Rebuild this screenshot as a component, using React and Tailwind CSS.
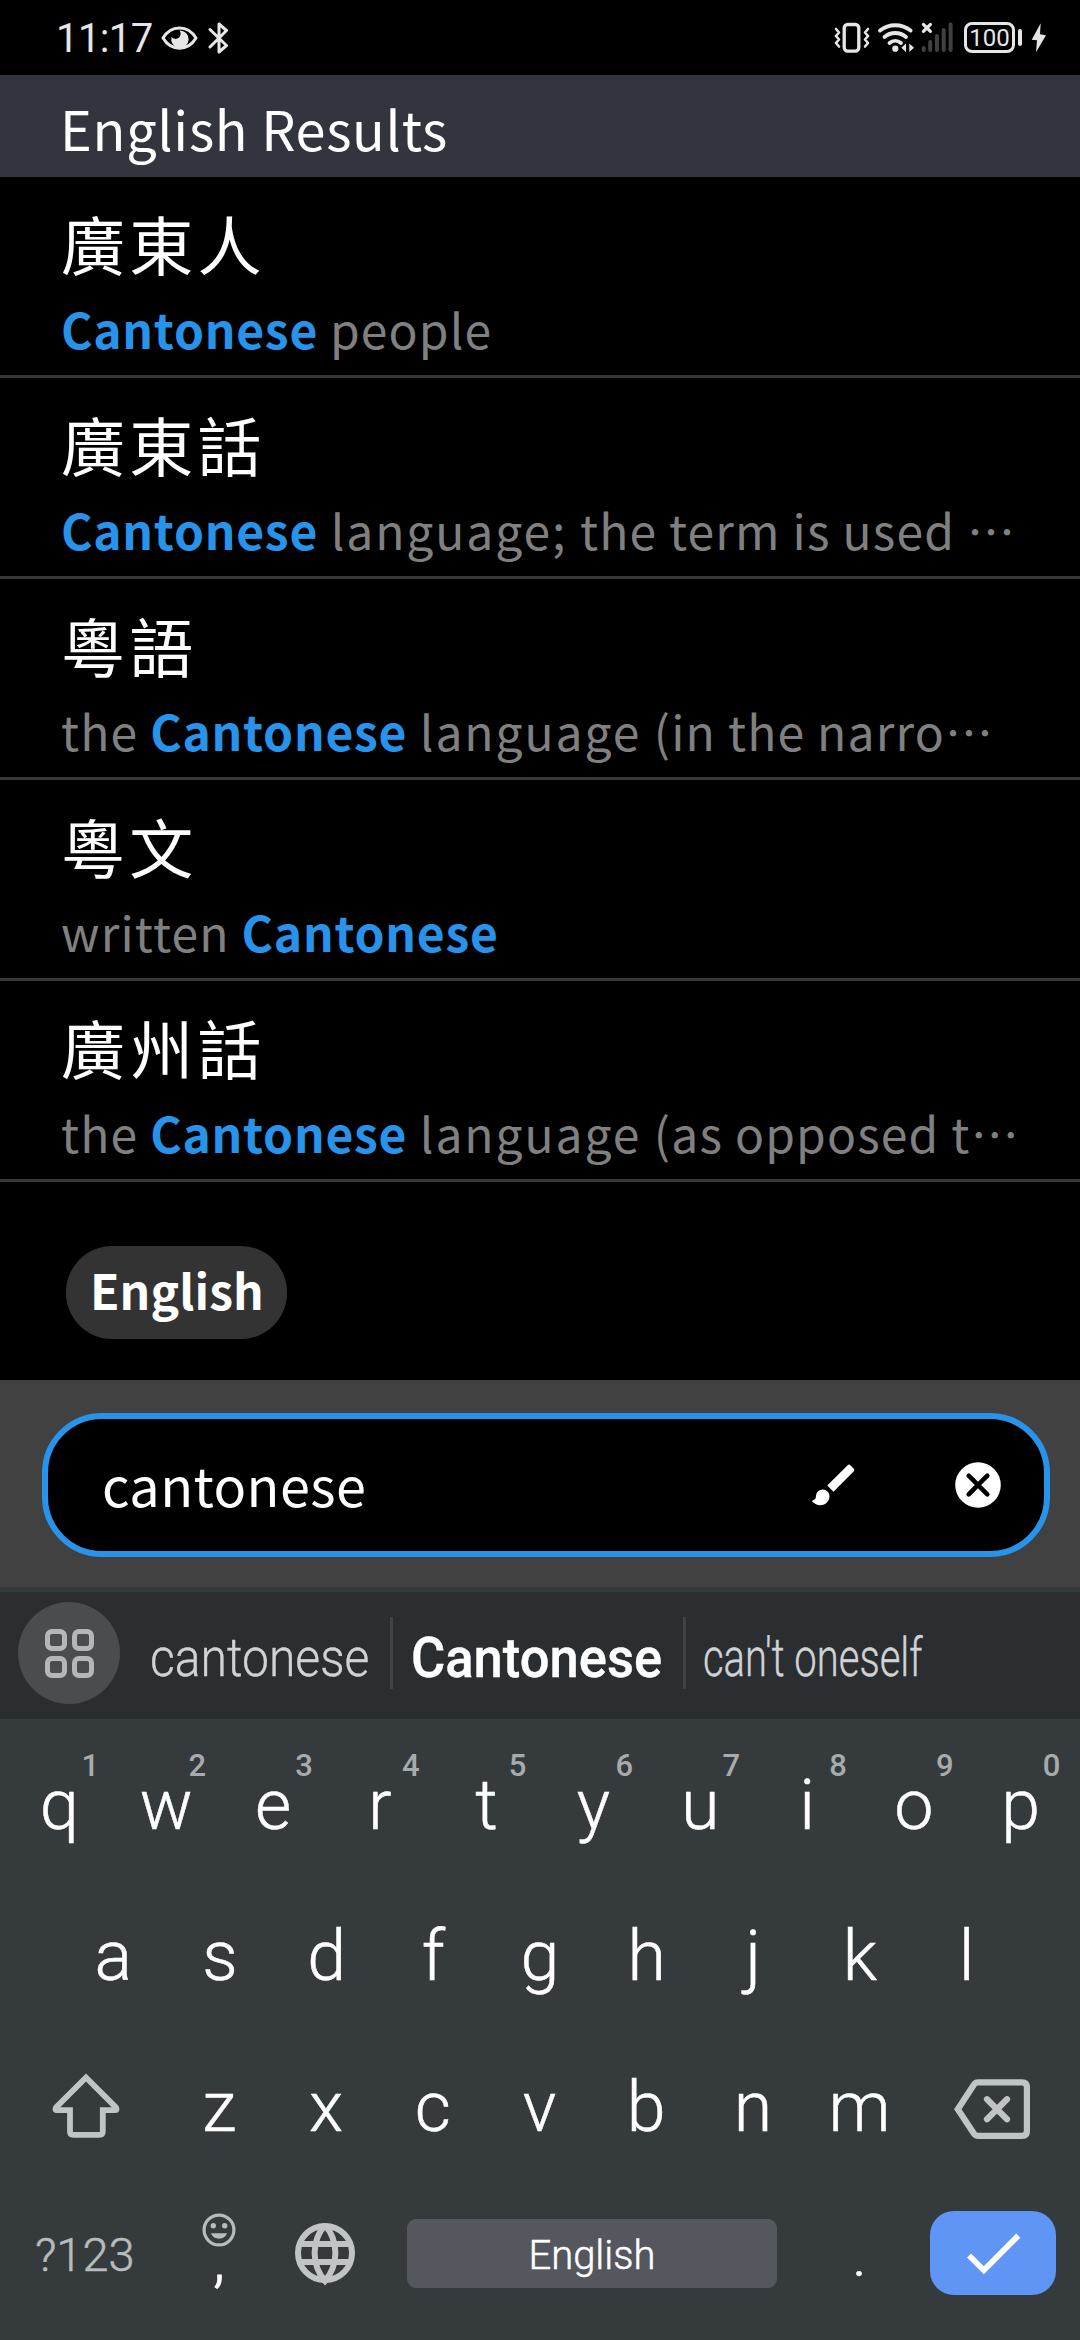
import React from 'react';

const entries = [
  { term: '廣東人', gloss: [['hit', 'Cantonese'], ['text', ' people']] },
  { term: '廣東話', gloss: [['hit', 'Cantonese'], ['wide', ' language; '], ['text', 'the term is used '], ['dots', '…']] },
  { term: '粵語', gloss: [['text', 'the '], ['hit', 'Cantonese'], ['wide', ' language '], ['text', '(in the narro'], ['dots', '…']] },
  { term: '粵文', gloss: [['text', 'written '], ['hit', 'Cantonese']] },
  { term: '廣州話', gloss: [['text', 'the '], ['hit', 'Cantonese'], ['wide', ' language '], ['text', '(as opposed t'], ['dots', '…']] },
];

const glossStyle = {
  hit: 'font-bold text-[#2793ea] tracking-[0.75px]',
  text: 'tracking-[1.150px]',
  wide: 'tracking-[1.9px]',
  dots: 'tracking-normal',
};

function StatusBar() {
  return (
    <div className="flex h-[75px] items-center justify-between pl-[56px] pr-[33px] font-[Roboto,sans-serif] text-[#e6e6e6]">
      <div className="flex items-center">
        <span className="w-[105px] pt-[2px] text-[40px] leading-[75px] tracking-[-0.600px]">11:17</span>
        <svg className="h-[75px] w-[37px]" viewBox="161 0 37 75">
          <path d="M163 38C171 24.500 188 24.500 196 38C188 51.500 171 51.500 163 38Z" fill="none" stroke="currentColor" strokeWidth="3" strokeLinejoin="round" />
          <path d="M179.500 30.500A8.700 8.700 0 1 1 171.500 37A5 5 0 0 0 179.500 30.500Z" fill="currentColor" />
        </svg>
        <svg className="ml-[10px] h-[75px] w-[21px]" viewBox="208 0 21 75" fill="none" stroke="currentColor" strokeWidth="3" strokeLinejoin="round" strokeLinecap="round">
          <path d="M210 29.500L226.500 45.500L219 52V24L226.500 30.500L210 47" />
        </svg>
      </div>
      <div className="flex items-center">
        <svg className="h-[75px] w-[38px]" viewBox="833 0 38 75" fill="none" stroke="currentColor" strokeLinejoin="round" strokeLinecap="round">
          <rect x="844.200" y="24.500" width="14.600" height="26.600" rx="3.500" strokeWidth="3.300" />
          <path d="M836 29l3 3.500l-3 3.500l3 3.500l-3 3.500l3 3.500M868 29l-3 3.500l3 3.500l-3 3.500l3 3.500l-3 3.500" strokeWidth="2.600" />
        </svg>
        <svg className="ml-[6px] h-[75px] w-[38px]" viewBox="877 0 38 75" fill="none" stroke="currentColor" strokeWidth="3.800" strokeLinecap="round">
          <path d="M880 30.500A25 25 0 0 1 910.600 30.500M884.500 37A16.500 16.500 0 0 1 906 37M889.500 43A9 9 0 0 1 901 43" />
          <circle cx="895.300" cy="48.700" r="3.100" fill="currentColor" stroke="none" />
          <path d="M906 43.500V52L901.300 47.800ZM909.300 43.500V52L914 47.800Z" fill="currentColor" stroke="none" />
        </svg>
        <svg className="ml-[5px] h-[75px] w-[34px]" viewBox="920 0 34 75" fill="none" strokeLinecap="round">
          <path d="M923.700 49.900V48M930.200 49.900V42M936.900 49.900V36M943.700 49.900V30M950.600 49.900V24.600" stroke="#404040" strokeWidth="4" />
          <path d="M923.400 24.400L930.400 31.400M930.400 24.400L923.400 31.400" stroke="currentColor" strokeWidth="3.200" />
        </svg>
        <div className="ml-[10px] flex h-[31px] w-[51px] items-center justify-center rounded-[8px] border-[3px] border-[#e6e6e6] text-[24px] leading-none">
          100
        </div>
        <div className="ml-[3px] h-[17px] w-[4px] rounded-full bg-[#e6e6e6]" />
        <svg className="ml-[8px] h-[75px] w-[17px]" viewBox="1029 0 17 75">
          <path d="M1039.700 23.300L1030.700 39.700L1036 40.300L1035 52.300L1045 35.300L1039 34.300Z" fill="currentColor" />
        </svg>
      </div>
    </div>
  );
}

function Entry({ term, gloss }) {
  return (
    <li className="flex h-[201px] flex-col gap-[16px] border-b-[3px] border-[#38383b] pl-[61px] pt-[25px]">
      <div className="h-[80px] text-[64px] leading-[80px] tracking-[4.200px] text-white">{term}</div>
      <div className="h-[60px] whitespace-pre text-[48px] leading-[60px] text-[#808080]">
        {gloss.map(([kind, text], i) => (
          <span key={i} className={glossStyle[kind]}>{text}</span>
        ))}
      </div>
    </li>
  );
}

function SearchBar() {
  return (
    <div className="h-[207px] bg-[#414141] pl-[42px] pr-[30px] pt-[33px]">
      <div className="flex h-[144px] items-center rounded-[60px] border-[6px] border-[#2793ea] bg-black pl-[54px] pr-[43px]">
        <span className="flex-1 pb-[3px] text-[54px] leading-[80px] tracking-[0.400px] text-white">cantonese</span>
        <svg className="h-[54px] w-[54px]" viewBox="0 0 24 24" fill="#fff">
          <path d="M7 14c-1.660 0-3 1.340-3 3 0 1.310-1.160 2-2 2 .92 1.220 2.490 2 4 2 2.210 0 4-1.790 4-4 0-1.660-1.340-3-3-3zm13.710-9.370l-1.340-1.340a.996.996 0 0 0-1.410 0L9 12.250 11.750 15l8.960-8.960c.39-.39.39-1.020 0-1.410z" />
        </svg>
        <svg className="ml-[94px] h-[46px] w-[46px]" viewBox="0 0 46 46">
          <circle cx="23" cy="23" r="22.800" fill="#fff" />
          <path d="M13.700 13.700L32.300 32.300M32.300 13.700L13.700 32.300" stroke="#000" strokeWidth="4.600" strokeLinecap="round" />
        </svg>
      </div>
    </div>
  );
}

function Suggestions() {
  return (
    <div className="flex h-[132px] items-start border-t-[5px] border-[#323a3d] bg-[#2a2e31] pl-[18px] pt-[10px] text-[54px] leading-[102px]">
      <div className="flex h-[102px] w-[102px] items-center justify-center rounded-full bg-[#4a4d50]">
        <div className="grid grid-cols-2 gap-[5px]">
          <i className="h-[22px] w-[22px] rounded-[7px] border-[5px] border-[#b3b7b8]" />
          <i className="h-[22px] w-[22px] rounded-[7px] border-[5px] border-[#b3b7b8]" />
          <i className="h-[22px] w-[22px] rounded-[7px] border-[5px] border-[#b3b7b8]" />
          <i className="h-[22px] w-[22px] rounded-[7px] border-[5px] border-[#b3b7b8]" />
        </div>
      </div>
      <div className="w-[270px] pl-[30px] pt-[5px]">
        <span className="inline-block origin-left scale-x-[0.890] whitespace-nowrap font-light text-[#d0d3d5] [-webkit-text-stroke:0.4px]">cantonese</span>
      </div>
      <div className="mt-[15px] h-[72px] w-[3px] bg-[#3f4347]" />
      <div className="w-[290px] pl-[18px] pt-[5px]">
        <span className="inline-block origin-left scale-x-[0.955] whitespace-nowrap text-[55px] font-medium text-white [-webkit-text-stroke:0.4px]">Cantonese</span>
      </div>
      <div className="mt-[15px] h-[72px] w-[3px] bg-[#3f4347]" />
      <div className="w-[290px] pl-[17px] pt-[5px]">
        <span className="inline-block origin-left scale-x-[0.740] whitespace-nowrap font-light text-[#d0d3d5] [-webkit-text-stroke:0.4px]">can't oneself</span>
      </div>
    </div>
  );
}

function Key({ label, hint }) {
  return (
    <div className="relative h-[151px] pt-px text-center text-[70px] leading-[151px]">
      {label}
      {hint && (
        <span className="absolute left-1/2 top-[18px] w-[62px] text-center text-[31px] font-medium leading-[38px] text-[#a7abad] [-webkit-text-stroke:0px]">{hint}</span>
      )}
    </div>
  );
}

function Keyboard() {
  return (
    <div className="h-[621px] bg-[#353b3d] pt-[10px] font-light text-white [-webkit-text-stroke:0.5px]">
      <div className="grid grid-cols-10 px-[6px]">
        {'qwertyuiop'.split('').map((c, i) => (
          <Key key={c} label={c} hint={'1234567890'[i]} />
        ))}
      </div>
      <div className="grid grid-cols-9 px-[60px]">
        {'asdfghjkl'.split('').map((c) => (
          <Key key={c} label={c} />
        ))}
      </div>
      <div className="flex items-center">
        <svg className="h-[151px] w-[166px]" viewBox="0 2031 166 151" fill="none" stroke="#c0c4c5" strokeWidth="5.800">
          <path d="M86 2077.500L116 2107.500Q118 2110.200 114.500 2110.200H102.800V2131.500Q102.800 2134.800 99.500 2134.800H73.300Q70 2134.800 70 2131.500V2110.200H57.500Q54 2110.200 56 2107.500Z" />
        </svg>
        <div className="grid w-[747px] grid-cols-7">
          {'zxcvbnm'.split('').map((c) => (
            <Key key={c} label={c} />
          ))}
        </div>
        <svg className="h-[151px] w-[167px]" viewBox="913 2031 167 151" fill="none" stroke="#c0c4c5" strokeWidth="6.200">
          <path d="M957.800 2109.300L974 2084.500Q975.500 2082.400 978 2082.400H1022Q1026.900 2082.400 1026.900 2087.300V2131Q1026.900 2135.900 1022 2135.900H978Q975.500 2135.900 974 2133.800Z" />
          <path d="M987 2099.300L1007 2119.300M1007 2099.300L987 2119.300" strokeLinecap="round" />
        </svg>
      </div>
      <div className="flex h-[142px] items-center">
        <div className="w-[166px] pl-[35px] pt-[4px] text-[47px] leading-[142px] text-[#b7bbbc]">?123</div>
        <div className="flex w-[106px] flex-col items-center gap-[2px] pb-[4px]">
          <svg className="h-[34px] w-[34px]" viewBox="-17 -17 34 34" fill="#b7bbbc">
            <circle r="14.900" fill="none" stroke="#b7bbbc" strokeWidth="3.200" />
            <circle cx="-5.700" cy="-4.200" r="2.700" />
            <circle cx="5.700" cy="-4.200" r="2.700" />
            <path d="M-8 3.300H8C6 10.500 -6 10.500 -8 3.300Z" />
          </svg>
          <span className="h-[40px] text-[60px] leading-[24px] [-webkit-text-stroke:1px]">,</span>
        </div>
        <svg className="h-[142px] w-[107px]" viewBox="-53 -71 107 142" fill="none" stroke="#c0c4c5" strokeWidth="6">
          <circle r="27" />
          <path d="M0 -28A43 43 0 0 0 0 28A43 43 0 0 0 0 -28M-26 -9H26M-26 9H26" />
        </svg>
        <div className="ml-[28px] h-[69px] w-[370px] rounded-[9px] bg-[#54575e] pt-px text-center text-[40px] leading-[71px]">English</div>
        <div className="w-[153px] pl-[12px] pt-[5px] text-center text-[60px] leading-[142px]">.</div>
        <div className="flex h-[84px] w-[126px] items-center justify-center rounded-[24px] bg-[#5f95f5]">
          <svg className="h-[84px] w-[126px]" viewBox="930 2211 126 84" fill="none" stroke="#fff" strokeWidth="5.800">
            <path d="M969 2255.500L983.800 2270.200L1018.300 2235.600" />
          </svg>
        </div>
      </div>
    </div>
  );
}

export default function App() {
  return (
    <div lang="zh-Hant" className="h-[2340px] w-[1080px] overflow-hidden bg-black font-['Noto_Sans_CJK_TC',sans-serif]">
      <StatusBar />
      <h1 className="h-[102px] bg-[#32353d] pl-[60px] pt-[2px] text-[54px] leading-[102px] tracking-[0.700px] text-white">English Results</h1>
      <ul>
        {entries.map((e) => (
          <Entry key={e.term} {...e} />
        ))}
      </ul>
      <div className="h-[198px] pl-[66px] pt-[64px]">
        <div className="h-[93px] w-[221px] rounded-[46px] bg-[#333] pl-[24px] text-[48px] font-bold leading-[87px] tracking-[0.100px] text-white">English</div>
      </div>
      <SearchBar />
      <div className="font-[Roboto,sans-serif]">
        <Suggestions />
        <Keyboard />
      </div>
    </div>
  );
}
